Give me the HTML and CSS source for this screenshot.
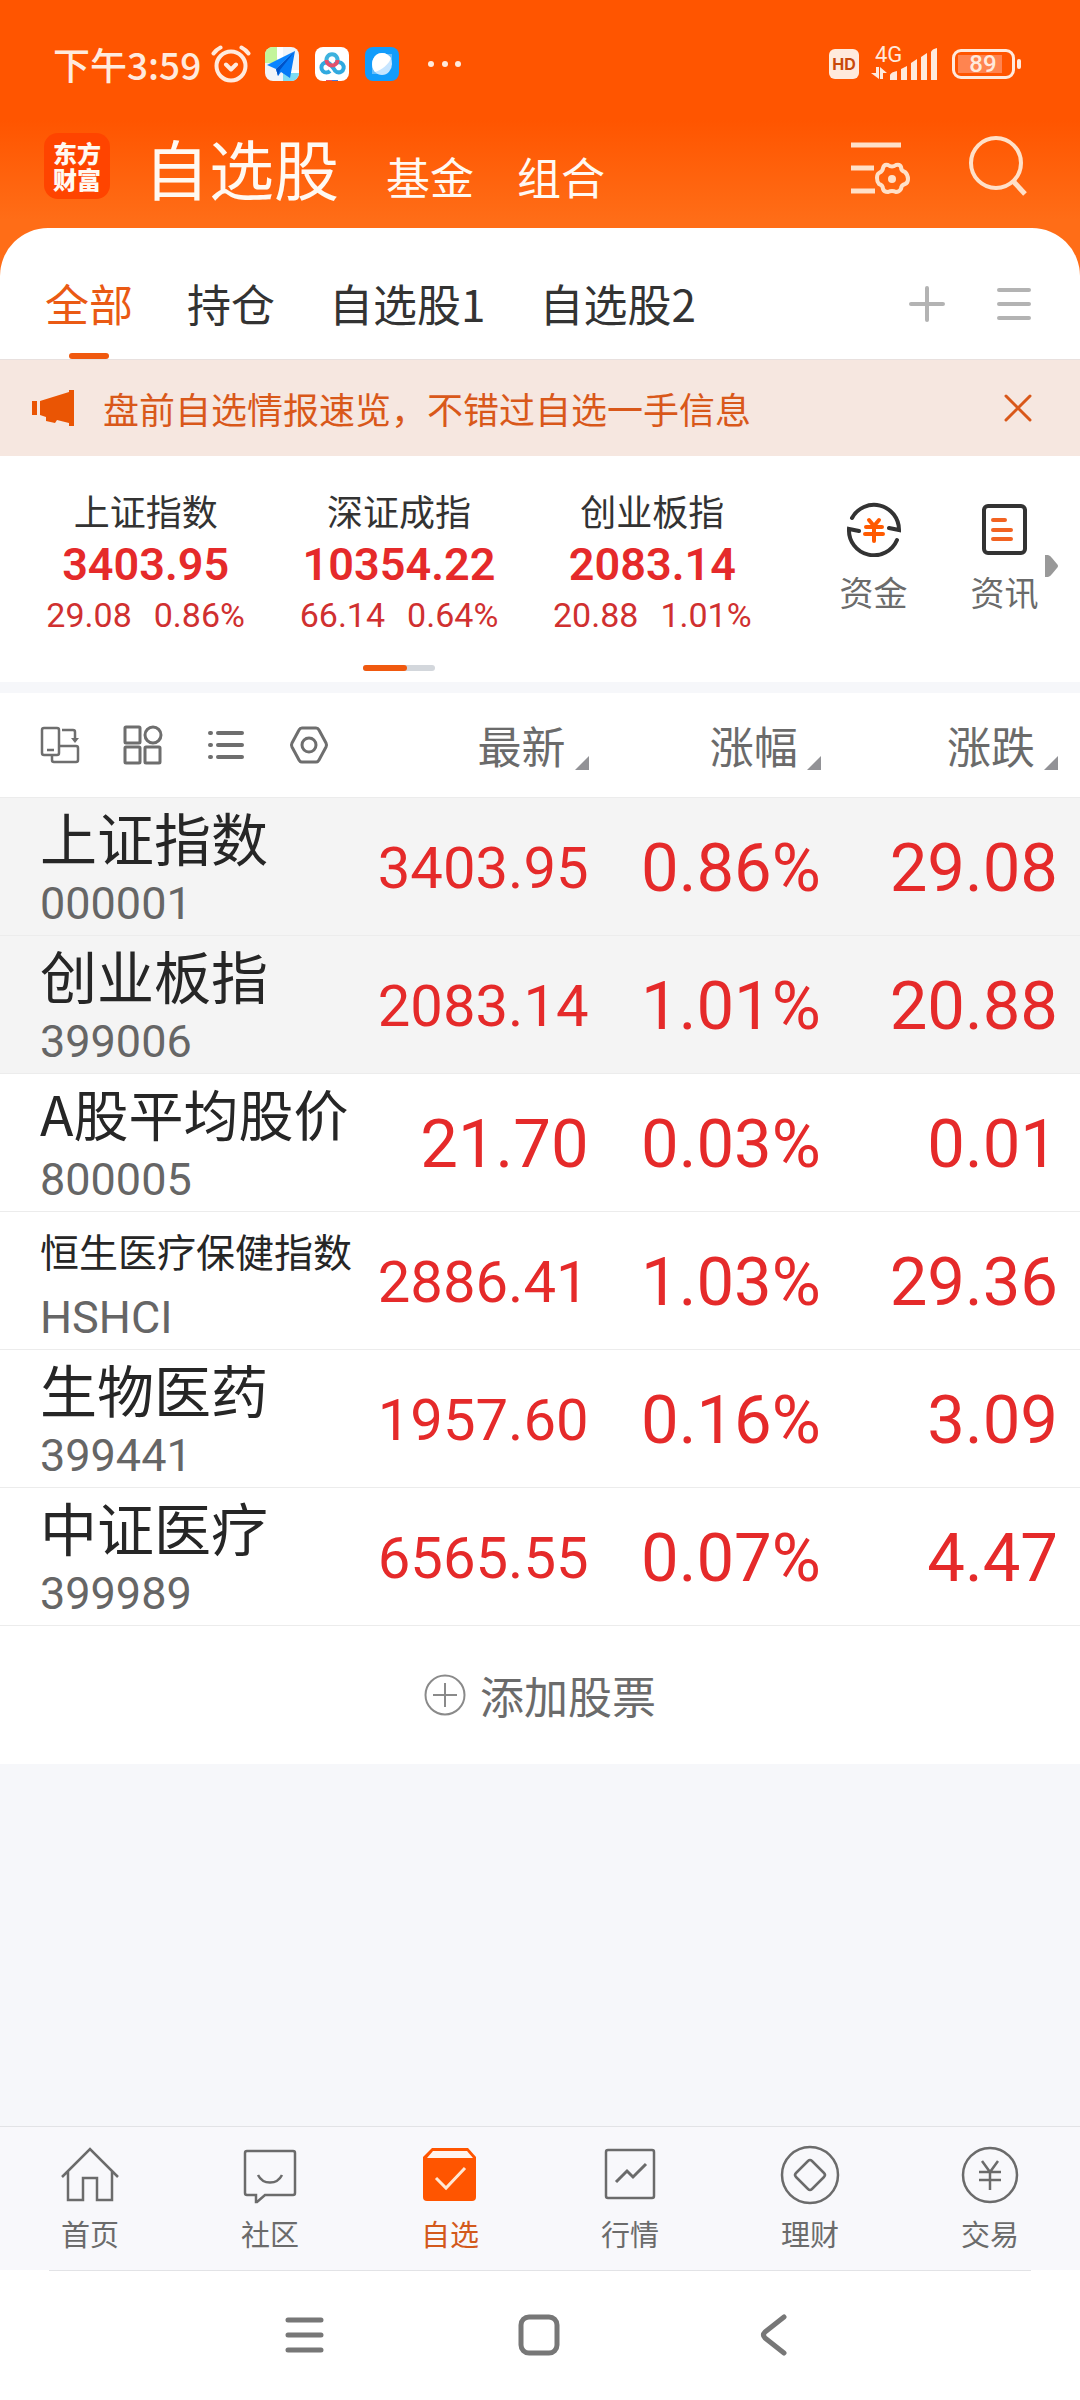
FILE: index.html
```html
<!DOCTYPE html>
<html lang="zh-CN">

<head>
  <meta charset="UTF-8">
  <meta name="viewport" content="width=device-width, initial-scale=1.0">
  <title>自选股</title>
  <link rel="stylesheet" href="styles.css">
</head>

<body>
  <!-- 顶部区域：状态栏和标题 -->
  <header class="header">
    <div class="status-bar">
      <span class="time">下午3:59</span>
      <svg class="alarm" width="40" height="38" viewBox="0 0 40 38" fill="none" stroke="#ffeadd" stroke-width="4" stroke-linecap="round" stroke-linejoin="round">
        <circle cx="20" cy="21" r="14.5" />
        <path d="M15 19.500l5 5 5-5M2.500 8.500q3-4 7-6M37.500 8.500q-3-4-7-6" />
      </svg>
      <svg class="app" width="34" height="34" viewBox="0 0 34 34">
        <clipPath id="app-clip"><rect width="34" height="34" rx="8" /></clipPath>
        <g clip-path="url(#app-clip)">
          <rect width="34" height="34" fill="#f1f4f8" />
          <path d="M0 0h13L12 16H0z" fill="#c3f59a" />
          <path d="M18 25h16v9H18z" fill="#7edcf3" />
          <path d="M12 0h6v12h-6zM20 23h14v3H20z" fill="#fff" />
          <path d="M30 4L2 18l9 4z" fill="#0a84ff" />
          <path d="M30 4L11 22l2 7 3-4 9 6z" fill="#067bf7" />
          <path d="M30 4L11 22l2 7 2-6z" fill="#0053c8" />
        </g>
      </svg>
      <svg class="app" width="34" height="34" viewBox="0 0 34 34" fill="none" stroke-width="4">
        <rect width="34" height="34" rx="8" fill="#fff" />
        <path d="M15 24a5 5 0 1 1 0-7l4 5a5 5 0 1 0 1-5" stroke="#31a9df" />
        <path d="M12 15a5.500 5.500 0 1 1 10 0" stroke="#3db2de" />
        <path d="M11.500 13a5.500 5.500 0 0 0 11 0" stroke="#e2506c" />
        <path d="M11 33.500h6" stroke="#e2506c" stroke-width="1" />
        <path d="M17 33.500h6" stroke="#4779d8" stroke-width="1" />
      </svg>
      <svg class="app" width="34" height="34" viewBox="0 0 34 34">
        <rect width="34" height="34" rx="8" fill="#129cfb" />
        <path d="M7 27V17L17 7h10v10L17 27z" fill="#65bdfb" />
        <ellipse cx="17" cy="17" rx="10" ry="11" fill="#c6e5ff" />
        <path d="M10 25C4 18 8 6 17 6c4 0 7 2 9 5-2 6-9 12-16 14z" fill="#fff" />
      </svg>
      <svg class="dots" width="34" height="8" viewBox="0 0 34 8" fill="#ffeadd">
        <circle cx="4" cy="4" r="3" />
        <circle cx="18" cy="4" r="3" />
        <circle cx="31" cy="4" r="3" />
      </svg>
      <div class="status-right">
        <span class="hd">HD</span>
        <div class="signal">
          <span class="net">4G</span>
          <svg width="68" height="34" viewBox="0 0 68 34" fill="#ffeadd">
            <path d="M5 20h3v12L0 26h5zM9 32V20l7 6h-4v6z" />
            <path d="M19 33v-5q1-3 7-4v9zM30 33V22l6-3v14zM40 33V16l6-4v21zM50 33V10l6-4v27zM60 33V5q1-3 6-4v32z" />
          </svg>
        </div>
        <div class="battery">
          <span class="battery-level">89</span>
        </div>
      </div>
    </div>

    <div class="title-bar">
      <div class="logo">东方<br>财富</div>
      <nav class="sections">
        <a href="#" class="section-main">自选股</a>
        <a href="#">基金</a>
        <a href="#">组合</a>
      </nav>
      <button class="icon-btn" aria-label="筛选设置">
        <svg width="60" height="60" viewBox="0 0 60 60" fill="none" stroke="#ffe0c8" stroke-width="5">
          <path d="M1 9h50M1 32h23M1 55h24" />
          <path d="M38 29q4 3 8 0q4-1 5 2q0 4 4 5q3 3 3 7q0 4-3 5q-4 1-4 5q-2 3-5 3q-4-2-8 0q-4 0-5-3q0-4-4-5q-2-2-2-6q0-4 2-5q4-2 4-5q1-4 5-3z" stroke-width="4" stroke-linejoin="round" />
          <circle cx="42" cy="43" r="4" fill="#ffe0c8" stroke="none" />
        </svg>
      </button>
      <button class="icon-btn search" aria-label="搜索">
        <svg width="60" height="62" viewBox="0 0 60 62" fill="none" stroke="#ffe0c8" stroke-width="4">
          <circle cx="28" cy="28" r="25" />
          <path d="M45 46l12 13" stroke-width="5" />
        </svg>
      </button>
    </div>
  </header>

  <main class="content">
    <!-- 分组标签 -->
    <div class="group-card">
      <nav class="groups">
        <a href="#" class="active">全部</a>
        <a href="#">持仓</a>
        <a href="#">自选股1</a>
        <a href="#">自选股2</a>
      </nav>
      <button class="icon-btn" aria-label="添加分组">
        <svg width="36" height="36" viewBox="0 0 36 36" stroke="#b3b3b3" stroke-width="4" stroke-linecap="round">
          <path d="M2 18h32M18 2v32" />
        </svg>
      </button>
      <button class="icon-btn group-menu" aria-label="管理分组">
        <svg width="34" height="36" viewBox="0 0 34 36" stroke="#b3b3b3" stroke-width="4" stroke-linecap="round">
          <path d="M2 4h30M2 18h30M2 32h30" />
        </svg>
      </button>
    </div>

    <!-- 公告 -->
    <div class="notice">
      <svg width="42" height="36" viewBox="0 0 42 36" fill="#ea5504">
        <path d="M0 11h5v14H0zM8 11L37 2V0h5v36h-5v-3l-12-3-2 3-9-2v-4l-6-2z" />
      </svg>
      <span class="notice-text">盘前自选情报速览，不错过自选一手信息</span>
      <button class="icon-btn" aria-label="关闭">
        <svg width="28" height="28" viewBox="0 0 28 28" stroke="#d9581a" stroke-width="3" stroke-linecap="round">
          <path d="M2 2l24 24M26 2L2 26" />
        </svg>
      </button>
    </div>

    <!-- 大盘指数 -->
    <section class="market">
      <div class="indexes">
        <div class="index">
          <div class="index-name">上证指数</div>
          <div class="index-value">3403.95</div>
          <div class="index-change"><span>29.08</span><span>0.86%</span></div>
        </div>
        <div class="index">
          <div class="index-name">深证成指</div>
          <div class="index-value">10354.22</div>
          <div class="index-change"><span>66.14</span><span>0.64%</span></div>
        </div>
        <div class="index">
          <div class="index-name">创业板指</div>
          <div class="index-value">2083.14</div>
          <div class="index-change"><span>20.88</span><span>1.01%</span></div>
        </div>
        <div class="pager"><span></span></div>
      </div>
      <div class="shortcuts">
        <a href="#" class="shortcut">
          <svg width="56" height="56" viewBox="0 0 56 56" fill="none" stroke="#333" stroke-width="4" stroke-linecap="round">
            <path d="M6 17a25 25 0 0 1 47 12l-10-2M51 39A25 25 0 0 1 3 28l10 2" />
            <path d="M23 19l5 6 5-6M20 26h16M19 33h18M28 26v14" stroke="#ff5a00" />
          </svg>
          资金
        </a>
        <a href="#" class="shortcut">
          <svg width="56" height="56" viewBox="0 0 56 56" fill="none" stroke="#333" stroke-width="4" stroke-linecap="round">
            <rect x="7" y="5" width="41" height="47" rx="4" />
            <path d="M16 19h12M16 29h18M16 38h18" stroke="#f26322" />
          </svg>
          资讯
        </a>
        <svg class="more-arrow" width="13" height="22" viewBox="0 0 13 22" fill="#999">
          <path d="M0 0q4-1 7 3l5 6q2 2 0 4l-5 6q-3 4-7 3z" />
        </svg>
      </div>
    </section>

    <!-- 自选列表 -->
    <table class="stocks">
      <thead>
        <tr>
          <th class="col-name">
            <div class="tools">
              <button class="icon-btn" aria-label="横屏">
                <svg width="40" height="40" viewBox="0 0 40 40" fill="none" stroke="#6e6e6e" stroke-width="2.500">
                  <rect x="2" y="3" width="17" height="27" rx="2" />
                  <path d="M7 25h7M12 30v5q0 2 2 2h22q2 0 2-2V23q0-2-2-2H19M22 5h11q2 0 2 2v9" />
                  <path d="M31 13h8l-4 5z" fill="#6e6e6e" stroke="none" />
                </svg>
              </button>
              <button class="icon-btn" aria-label="宫格">
                <svg width="40" height="40" viewBox="0 0 40 40" fill="none" stroke="#6e6e6e" stroke-width="3">
                  <rect x="2" y="2" width="15" height="16" rx="1" />
                  <circle cx="30" cy="10" r="8" />
                  <rect x="2" y="22" width="15" height="16" rx="1" />
                  <rect x="22" y="22" width="15" height="16" rx="1" />
                </svg>
              </button>
              <button class="icon-btn" aria-label="列表">
                <svg width="40" height="40" viewBox="0 0 40 40" stroke="#6e6e6e" stroke-width="4" stroke-linecap="round">
                  <path d="M4 8h1M12 8h24M4 20h1M12 20h24M4 32h1M12 32h24" />
                </svg>
              </button>
              <button class="icon-btn" aria-label="设置">
                <svg width="40" height="40" viewBox="0 0 40 40" fill="none" stroke="#6e6e6e" stroke-width="3" stroke-linejoin="round">
                  <path d="M13 3h14q2 0 3 2l7 13q1 2 0 4l-7 13q-1 2-3 2H13q-2 0-3-2L3 22q-1-2 0-4l7-13q1-2 3-2z" />
                  <circle cx="20" cy="20" r="7" />
                </svg>
              </button>
            </div>
          </th>
          <th><button class="sort">最新</button></th>
          <th><button class="sort">涨幅</button></th>
          <th class="col-last"><button class="sort">涨跌</button></th>
        </tr>
      </thead>
      <tbody>
        <tr class="pinned">
          <td class="col-name">
            <div class="name">上证指数</div>
            <div class="code">000001</div>
          </td>
          <td class="long">3403.95</td>
          <td>0.86%</td>
          <td class="col-last">29.08</td>
        </tr>
        <tr class="pinned">
          <td class="col-name">
            <div class="name">创业板指</div>
            <div class="code">399006</div>
          </td>
          <td class="long">2083.14</td>
          <td>1.01%</td>
          <td class="col-last">20.88</td>
        </tr>
        <tr>
          <td class="col-name">
            <div class="name name-medium">A股平均股价</div>
            <div class="code">800005</div>
          </td>
          <td>21.70</td>
          <td>0.03%</td>
          <td class="col-last">0.01</td>
        </tr>
        <tr>
          <td class="col-name">
            <div class="name name-long">恒生医疗保健指数</div>
            <div class="code">HSHCI</div>
          </td>
          <td class="long">2886.41</td>
          <td>1.03%</td>
          <td class="col-last">29.36</td>
        </tr>
        <tr>
          <td class="col-name">
            <div class="name">生物医药</div>
            <div class="code">399441</div>
          </td>
          <td class="long">1957.60</td>
          <td>0.16%</td>
          <td class="col-last">3.09</td>
        </tr>
        <tr>
          <td class="col-name">
            <div class="name">中证医疗</div>
            <div class="code">399989</div>
          </td>
          <td class="long">6565.55</td>
          <td>0.07%</td>
          <td class="col-last">4.47</td>
        </tr>
      </tbody>
    </table>

    <button class="add-stock">
      <svg width="42" height="42" viewBox="0 0 42 42" fill="none" stroke="#8a8a8a" stroke-width="2">
        <circle cx="21" cy="21" r="19.500" />
        <path d="M9 21h24M21 9v24" />
      </svg>
      添加股票
    </button>
  </main>

  <!-- 底部导航 -->
  <nav class="tab-bar">
    <a href="#" class="tab">
      <svg width="60" height="60" viewBox="0 0 60 60" fill="none" stroke="#6b6b6b" stroke-width="2.500">
        <path d="M2 32L30 4l28 28M8 26v29h15V33h14v22h15V26" />
      </svg>
      首页
    </a>
    <a href="#" class="tab">
      <svg width="60" height="60" viewBox="0 0 60 60" fill="none" stroke="#6b6b6b" stroke-width="2.500">
        <path d="M7 6h46q2 0 2 2v40q0 2-2 2H25l-8 7h-1v-7H7q-2 0-2-2V8q0-2 2-2z" />
        <path d="M18 30c5 10 19 10 24 0" />
      </svg>
      社区
    </a>
    <a href="#" class="tab active">
      <svg width="60" height="60" viewBox="0 0 60 60">
        <path d="M12 3h36l8 9v40q0 4-4 4H7q-4 0-4-4V12z" fill="#ff5500" />
        <path d="M13 6h34l6 7H7z" fill="#fff4ee" />
        <path d="M16 33l10 10 19-20" fill="none" stroke="#ffe7d3" stroke-width="3" />
      </svg>
      自选
    </a>
    <a href="#" class="tab">
      <svg width="60" height="60" viewBox="0 0 60 60" fill="none" stroke="#6b6b6b" stroke-width="2.500">
        <rect x="6" y="5" width="48" height="48" rx="2" />
        <path d="M16 37l11-11 6 6 13-13" stroke-width="3" />
      </svg>
      行情
    </a>
    <a href="#" class="tab">
      <svg width="60" height="60" viewBox="0 0 60 60" fill="none" stroke="#6b6b6b" stroke-width="2.500">
        <circle cx="30" cy="30" r="28" />
        <path d="M28 16q2-2 4 0l12 12q2 2 0 4L32 44q-2 2-4 0L16 32q-2-2 0-4z" />
      </svg>
      理财
    </a>
    <a href="#" class="tab">
      <svg width="60" height="60" viewBox="0 0 60 60" fill="none" stroke="#6b6b6b" stroke-width="2.500">
        <circle cx="30" cy="30" r="27" />
        <path d="M22 16l8 11 8-11M19 27h22M19 35h22M30 27v18" />
      </svg>
      交易
    </a>
  </nav>

  <!-- 系统导航键 -->
  <div class="system-nav">
    <button class="icon-btn" aria-label="最近任务">
      <svg width="44" height="44" viewBox="0 0 44 44" stroke="#777" stroke-width="5" stroke-linecap="round">
        <path d="M5 7h33M5 22h33M5 37h33" />
      </svg>
    </button>
    <button class="icon-btn" aria-label="主屏幕">
      <svg width="44" height="44" viewBox="0 0 44 44" fill="none" stroke="#777" stroke-width="5">
        <rect x="3" y="4" width="36" height="36" rx="8" />
      </svg>
    </button>
    <button class="icon-btn" aria-label="返回">
      <svg width="44" height="44" viewBox="0 0 44 44" fill="none" stroke="#777" stroke-width="5" stroke-linecap="round" stroke-linejoin="round">
        <path d="M31 4L12 19q-3 3 0 6l19 15" />
      </svg>
    </button>
  </div>
</body>

</html>
```
FILE: styles.css
```css
/* 整体布局样式 */
* {
  box-sizing: border-box;
}

body {
  display: flex;
  flex-direction: column;
  min-height: 100vh;
  margin: 0;
  background-color: #f6f7fa;
  color: #333;
  font-family: "Noto Sans CJK SC", sans-serif;
}

a {
  color: inherit;
  text-decoration: none;
}

button {
  padding: 0;
  border: none;
  background: none;
  color: inherit;
  font: inherit;
  cursor: pointer;
}

svg {
  display: block;
  flex-shrink: 0;
}

.icon-btn {
  flex-shrink: 0;
}

/* 顶部区域样式，底部多出一段垫在圆角卡片后面 */
.header {
  padding-bottom: 72px;
  background: linear-gradient(#ff5500 120px, #ff6d17 220px);
}

/* 状态栏样式 */
.status-bar {
  display: flex;
  align-items: center;
  height: 128px;
  padding: 0 59px 0 53px;
  color: #ffeadd;
}

.time {
  font-size: 37px;
  font-weight: 500;
  line-height: 56px;
  margin-right: 10px;
}

.alarm {
  margin-right: 14px;
}

.app {
  margin-right: 16px;
}

.dots {
  margin-left: 12px;
}

.status-right {
  display: flex;
  align-items: center;
  margin-left: auto;
}

.hd {
  width: 30px;
  height: 30px;
  margin-right: 12px;
  border-radius: 6px;
  background-color: #ffeadd;
  color: #c9490a;
  font: 700 16px/30px Inter, sans-serif;
  text-align: center;
}

.signal {
  position: relative;
  margin-right: 13px;
}

.net {
  position: absolute;
  left: 4px;
  top: -3px;
  font-family: Roboto, sans-serif;
  font-size: 22px;
  line-height: 22px;
}

.battery {
  position: relative;
  width: 63px;
  height: 30px;
  margin-right: 6px;
  padding: 3px;
  border: 3px solid #ffeadd;
  border-radius: 9px;
}

.battery::after {
  position: absolute;
  content: "";
  top: 7px;
  right: -9px;
  width: 4px;
  height: 10px;
  border-radius: 2px;
  background-color: #ffeadd;
}

.battery-level {
  display: block;
  width: 44px;
  padding-left: 6px;
  background-color: #ff8450;
  font-family: Roboto, sans-serif;
  font-size: 24px;
  font-weight: 500;
  line-height: 18px;
  text-align: center;
}

/* 标题栏样式 */
.title-bar {
  display: flex;
  align-items: center;
  height: 76px;
  padding: 0 52px 0 44px;
  color: #fff9f2;
}

.logo {
  width: 66px;
  height: 66px;
  padding-top: 7px;
  border-radius: 14px;
  background-color: #ff4400;
  font-size: 24px;
  font-weight: 900;
  line-height: 26px;
  text-align: center;
}

.sections {
  display: flex;
  align-items: baseline;
  gap: 43px;
  flex: 1;
  padding-top: 10px;
  margin-left: 34px;
  font-size: 44px;
  line-height: 76px;
}

.section-main {
  margin-right: 4px;
  font-size: 65px;
}

.search {
  margin-left: 58px;
}

/* 分组标签样式 */
.content {
  margin-top: -48px;
}

.group-card {
  display: flex;
  align-items: center;
  height: 131px;
  padding: 0 49px 0 45px;
  border-radius: 48px 48px 0 0;
  background-color: #fff;
}

.groups {
  display: flex;
  align-self: stretch;
  gap: 54px;
  flex: 1;
  font-size: 44px;
}

.groups a {
  padding-top: 9px;
  line-height: 132px;
  height: 131px;
}

.groups .active {
  position: relative;
  color: #ea5a14;
}

.groups .active::after {
  position: absolute;
  content: "";
  left: 50%;
  bottom: 0;
  width: 40px;
  height: 6px;
  margin-left: -20px;
  border-radius: 3px;
  background-color: #f0590f;
}

.group-card .icon-btn {
  margin-top: 21px;
}

.group-menu {
  margin-left: 52px;
}

/* 公告样式 */
.notice {
  display: flex;
  align-items: center;
  height: 97px;
  padding: 0 48px 0 32px;
  border-top: 1px solid #e8e0de;
  background-color: #f6e7e0;
  color: #d9581a;
}

.notice-text {
  flex: 1;
  margin-left: 29px;
  font-size: 36px;
  line-height: 48px;
}

/* 大盘指数样式 */
.market {
  display: flex;
  justify-content: space-between;
  height: 226px;
  padding: 28px 10px 0 19px;
  background-color: #fff;
}

.indexes {
  display: grid;
  grid-template-columns: repeat(3, 1fr);
  align-content: start;
  flex: 1;
  text-align: center;
}

.index-name {
  font-size: 36px;
  line-height: 52px;
}

.index-value,
.index-change {
  font-family: Roboto, sans-serif;
}

.index-value {
  padding-top: 2px;
  color: #e52a2a;
  font-size: 45px;
  font-weight: 600;
  line-height: 54px;
}

.index-change {
  display: flex;
  justify-content: center;
  gap: 22px;
  color: #d03030;
  font-size: 34px;
  line-height: 46px;
}

.pager {
  grid-column: 1 / 4;
  justify-self: center;
  width: 72px;
  height: 6px;
  margin-top: 27px;
  border-radius: 3px;
  background-color: #d3d7dc;
}

.pager span {
  display: block;
  width: 44px;
  height: 6px;
  border-radius: 3px;
  background-color: #f0590f;
}

.shortcuts {
  position: relative;
  display: flex;
  margin-left: 29px;
}

.shortcut {
  display: flex;
  flex-direction: column;
  align-items: center;
  width: 131px;
  padding-top: 17px;
  color: #6b6b6b;
  font-size: 34px;
  line-height: 70px;
}

.more-arrow {
  position: absolute;
  top: 71px;
  right: 12px;
}

/* 自选列表样式 */
.stocks {
  width: 100%;
  margin-top: 11px;
  border-collapse: collapse;
  table-layout: fixed;
  background-color: #fff;
}

.stocks th,
.stocks td {
  padding: 0;
  font-weight: 400;
  text-align: right;
}

.stocks th {
  height: 104px;
  color: #6b6b6b;
  font-size: 44px;
}

.stocks td {
  height: 138px;
  padding-top: 4px;
  border-top: 1px solid #ececec;
  color: #e52a2a;
  font-family: Roboto, sans-serif;
  font-size: 67px;
  line-height: 96px;
}

.stocks tbody {
  border-bottom: 1px solid #ececec;
}

.stocks .col-name {
  width: 33%;
  padding-left: 40px;
  text-align: left;
  vertical-align: top;
  white-space: nowrap;
}

.stocks th.col-name {
  vertical-align: middle;
}

.stocks .col-last {
  width: 24%;
  padding-right: 22px;
}

.stocks .long {
  font-size: 58px;
}

.pinned {
  background-color: #f4f4f4;
}

.name {
  color: #262626;
  font-family: "Noto Sans CJK SC", sans-serif;
  font-size: 57px;
  line-height: 68px;
}

.name-medium {
  font-size: 55px;
}

.name-long {
  font-size: 39px;
}

.code {
  padding-top: 4px;
  color: #666;
  font-size: 45px;
  line-height: 60px;
}

.tools {
  display: flex;
  gap: 43px;
}

/* 排序按钮右下角的小三角 */
.sort {
  display: inline-flex;
  align-items: flex-end;
  gap: 9px;
  line-height: 60px;
}

.sort::after {
  content: "";
  margin-bottom: 5px;
  border-bottom: 14px solid #929296;
  border-left: 14px solid transparent;
}

.add-stock {
  display: flex;
  align-items: center;
  justify-content: center;
  gap: 14px;
  width: 100%;
  height: 138px;
  background-color: #fff;
  color: #6b6b6b;
  font-size: 44px;
  line-height: 60px;
}

/* 底部导航样式 */
.tab-bar {
  display: flex;
  height: 144px;
  margin-top: auto;
  border-top: 1px solid #e2e3e6;
  background-color: #f8f8fb;
}

.tab {
  display: flex;
  flex-direction: column;
  align-items: center;
  flex: 1;
  padding-top: 18px;
  color: #6b6b6b;
  font-size: 29px;
  line-height: 56px;
}

.tab.active {
  color: #d3591c;
}

/* 系统导航键样式 */
.system-nav {
  display: flex;
  align-items: center;
  justify-content: center;
  gap: 191px;
  height: 130px;
  background: linear-gradient(#e2e3e6, #e2e3e6) center top / calc(100% - 98px) 1px no-repeat #fff;
}
```
